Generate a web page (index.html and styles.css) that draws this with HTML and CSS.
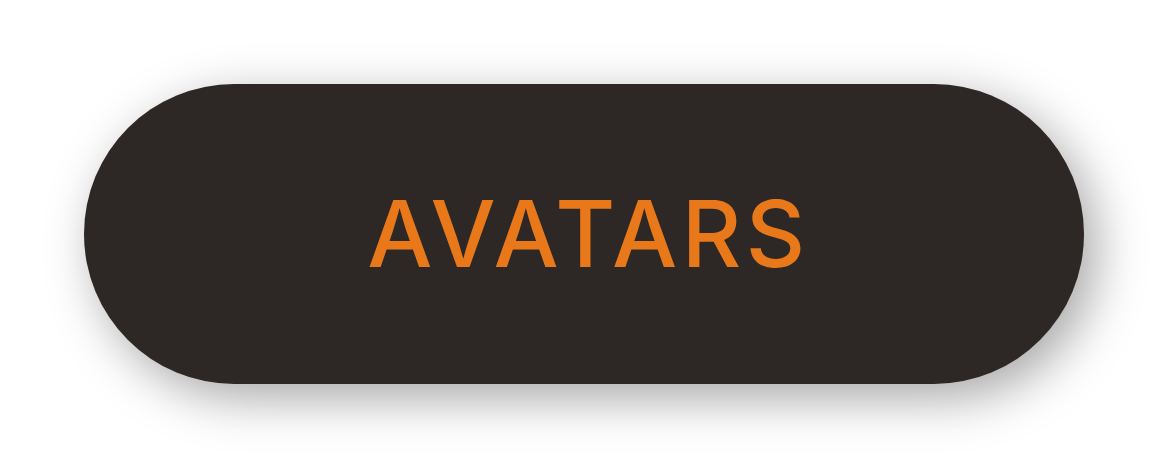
FILE: index.html
```html
<!DOCTYPE html>
<html>
<head>
<meta charset="utf-8">
<link rel="stylesheet" href="styles.css">
</head>
<body>
<div class="stage">
  <button class="pill">AVATARS</button>
</div>
</body>
</html>
```
FILE: styles.css
```css
html, body {
  margin: 0;
  padding: 0;
  background: #ffffff;
}
.stage {
  width: 1168px;
  height: 468px;
  padding: 84px 0 0 84px;
  box-sizing: border-box;
}
.pill {
  width: 1000px;
  height: 300px;
  border: none;
  border-radius: 150px;
  background: #2d2725;
  color: #e8781a;
  font-family: Inter, "Noto Sans", sans-serif;
  font-weight: 550;
  font-size: 92px;
  letter-spacing: 4.5px;
  padding: 0 0 0 9px;
  display: flex;
  align-items: center;
  justify-content: center;
  box-shadow: 12px 14px 50px rgba(0, 0, 0, 0.35);
  line-height: 1;
}
```
